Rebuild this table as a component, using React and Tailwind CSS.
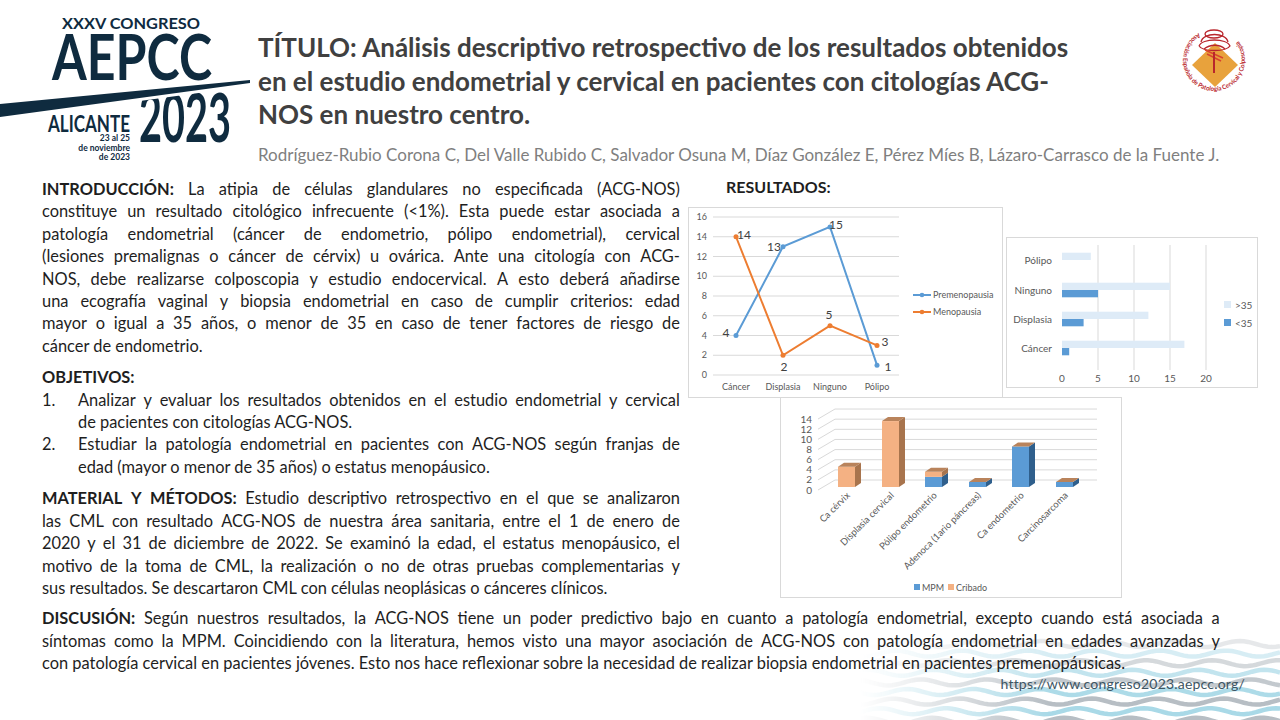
import React from 'react';

const NAVY = '#0f2b3f';

// one justified line: words spread across the width, never wraps
function J({ b, t }) {
  const words = [
    ...(b ? b.split(' ').map((w) => [w, true]) : []),
    ...t.split(' ').map((w) => [w, false]),
  ];
  return (
    <div className="flex justify-between gap-[3px] whitespace-nowrap">
      {words.map(([w, bold], i) => (
        <span key={i} className={bold ? 'font-bold' : ''}>{w}</span>
      ))}
    </div>
  );
}

function AepccLogo() {
  return (
    <svg width="250" height="170" viewBox="0 0 250 170" className="shrink-0">
      <text x="131" y="29" textAnchor="middle" fontSize="15" fontWeight="700" fill={NAVY} fontFamily="Lato, sans-serif" textLength="138" lengthAdjust="spacingAndGlyphs">XXXV CONGRESO</text>
      <text x="52" y="80" fontSize="64" fontWeight="700" fill={NAVY} fontFamily="Lato, sans-serif" textLength="160" lengthAdjust="spacingAndGlyphs">AEPCC</text>
      <text x="48" y="132" fontSize="23" fontWeight="700" fill={NAVY} fontFamily="Lato, sans-serif" textLength="82" lengthAdjust="spacingAndGlyphs">ALICANTE</text>
      <text x="139" y="142" fontSize="67" fontWeight="700" fill={NAVY} fontFamily="Lato, sans-serif" textLength="92" lengthAdjust="spacingAndGlyphs">2023</text>
      <polygon points="0,100 250,77 250,86 0,120" fill="#ffffff" />
      <polygon points="0,104 250,80 250,83 0,117" fill={NAVY} />
      <g fontFamily="Lato, sans-serif" fontWeight="700" fontSize="8.5" fill={NAVY} textAnchor="end">
        <text x="130" y="141">23 al 25</text>
        <text x="130" y="150.5">de noviembre</text>
        <text x="130" y="160">de 2023</text>
      </g>
    </svg>
  );
}

function AepccSeal() {
  const r = 31;
  const cx = 38;
  const cy = 38;
  const sx = cx + r * Math.cos((120 * Math.PI) / 180);
  const sy = cy - r * Math.sin((120 * Math.PI) / 180);
  const ex = cx + r * Math.cos((60 * Math.PI) / 180);
  const d = `M ${sx} ${sy} A ${r} ${r} 0 1 0 ${ex} ${sy}`;
  return (
    <svg width="76" height="76" viewBox="0 0 76 76" className="shrink-0">
      <defs>
        <path id="sealArc" d={d} />
      </defs>
      <polygon points="39,21 62,43 39,65 16,43" fill="#e8a23c" />
      <g stroke="#b9262c" fill="none" strokeWidth="1.3">
        <ellipse cx="38" cy="12" rx="9" ry="4" />
        <path d="M25 20 C 27 10, 50 10, 52 20" />
        <path d="M23 24 C 26 16, 51 16, 54 24 C 50 30, 27 30, 23 24" />
        <path d="M28 27 C 34 22, 44 22, 49 27" />
      </g>
      <g stroke="#d9442e" strokeWidth="1.6">
        <line x1="29" y1="28" x2="47" y2="36" />
        <line x1="31" y1="32" x2="45" y2="39" />
      </g>
      <line x1="38" y1="30" x2="38" y2="51" stroke="#b9262c" strokeWidth="2" />
      <text fontSize="6.4" fontWeight="700" fill="#b9262c" fontFamily="Lato, sans-serif">
        <textPath href="#sealArc" textLength="150" lengthAdjust="spacingAndGlyphs">
          Asociación Española de Patología Cervical y Colposcopia
        </textPath>
      </text>
    </svg>
  );
}

function LineChart() {
  const xs = [48, 95, 142, 189];
  const y = (v) => 168 - v * 9.875;
  const pre = [4, 13, 15, 1];
  const meno = [14, 2, 5, 3];
  const ticks = [0, 2, 4, 6, 8, 10, 12, 14, 16];
  const cats = ['Cáncer', 'Displasia', 'Ninguno', 'Pólipo'];
  const preLabels = [[38, 126], [86, 40], [148, 18], [200, 160]];
  const menoLabels = [[56, 28], [96, 160], [141, 108], [197, 135]];
  return (
    <div className="w-[315px] h-[191px] border border-[#d9d9d9] bg-white shrink-0">
      <svg width="313" height="189" viewBox="1 1 313 189" fontFamily="Lato, sans-serif">
        {ticks.map((t) => (
          <g key={t}>
            <line x1="25" x2="211" y1={y(t)} y2={y(t)} stroke="#d9d9d9" strokeWidth="1" />
            <text x="19" y={y(t) + 3} fontSize="9" fill="#595959" textAnchor="end">{t}</text>
          </g>
        ))}
        {cats.map((c, i) => (
          <text key={c} x={xs[i]} y="183" fontSize="9" fill="#595959" textAnchor="middle">{c}</text>
        ))}
        <polyline points={xs.map((x, i) => `${x},${y(pre[i])}`).join(' ')} fill="none" stroke="#5b9bd5" strokeWidth="2" />
        <polyline points={xs.map((x, i) => `${x},${y(meno[i])}`).join(' ')} fill="none" stroke="#ed7d31" strokeWidth="2" />
        {xs.map((x, i) => (
          <g key={x}>
            <circle cx={x} cy={y(pre[i])} r="2.5" fill="#5b9bd5" />
            <circle cx={x} cy={y(meno[i])} r="2.5" fill="#ed7d31" />
          </g>
        ))}
        {preLabels.map(([lx, ly], i) => (
          <text key={'p' + i} x={lx} y={ly + 4} fontSize="12" fill="#404040" textAnchor="middle">{pre[i]}</text>
        ))}
        {menoLabels.map(([lx, ly], i) => (
          <text key={'m' + i} x={lx} y={ly + 4} fontSize="12" fill="#404040" textAnchor="middle">{meno[i]}</text>
        ))}
        <line x1="225" x2="243" y1="88" y2="88" stroke="#5b9bd5" strokeWidth="2" />
        <circle cx="234" cy="88" r="2.3" fill="#5b9bd5" />
        <text x="245" y="91" fontSize="9" fill="#595959">Premenopausia</text>
        <line x1="225" x2="243" y1="105" y2="105" stroke="#ed7d31" strokeWidth="2" />
        <circle cx="234" cy="105" r="2.3" fill="#ed7d31" />
        <text x="245" y="108" fontSize="9" fill="#595959">Menopausia</text>
      </svg>
    </div>
  );
}

function BarChart() {
  const cats = [
    { n: 'Pólipo', c: 23, a: 4, b: 0 },
    { n: 'Ninguno', c: 53, a: 15, b: 5 },
    { n: 'Displasia', c: 82, a: 12, b: 3 },
    { n: 'Cáncer', c: 111, a: 17, b: 1 },
  ];
  const u = 7.2;
  return (
    <div className="w-[252px] h-[151px] border border-[#d9d9d9] bg-white shrink-0 ml-[3px] mt-[30px]">
      <svg width="250" height="149" viewBox="1 1 250 149" fontFamily="Lato, sans-serif">
        {[1, 2, 3, 4].map((k) => (
          <line key={k} x1={56 + 36 * k} x2={56 + 36 * k} y1="8" y2="133" stroke="#d9d9d9" strokeWidth="1" />
        ))}
        {[0, 5, 10, 15, 20].map((v, k) => (
          <text key={v} x={56 + 36 * k} y="145" fontSize="10" fill="#595959" textAnchor="middle">{v}</text>
        ))}
        {cats.map((c) => (
          <g key={c.n}>
            <rect x="56" y={c.c - 7.3} width={c.a * u} height="7.3" fill="#deebf7" />
            {c.b > 0 && <rect x="56" y={c.c} width={c.b * u} height="7.3" fill="#5b9bd5" />}
            <text x="46" y={c.c + 3.5} fontSize="10" fill="#595959" textAnchor="end">{c.n}</text>
          </g>
        ))}
        <rect x="218" y="64" width="7" height="7" fill="#deebf7" />
        <text x="229" y="71.5" fontSize="10" fill="#595959">&gt;35</text>
        <rect x="218" y="82" width="7" height="7" fill="#5b9bd5" />
        <text x="229" y="89.5" fontSize="10" fill="#595959">&lt;35</text>
      </svg>
    </div>
  );
}

function ColumnChart() {
  const bars = [
    { n: 'Ca cérvix', x: 58, mpm: 0, cri: 4 },
    { n: 'Displasia cervical', x: 102, mpm: 0, cri: 13 },
    { n: 'Pólipo endometrio', x: 145, mpm: 2, cri: 1 },
    { n: 'Adenoca (1ario páncreas)', x: 189, mpm: 1, cri: 0 },
    { n: 'Ca endometrio', x: 232, mpm: 8, cri: 0 },
    { n: 'Carcinosarcoma', x: 276, mpm: 1, cri: 0 },
  ];
  const u = 5.07;
  const base = 90;
  const w = 17;
  const dx = 6;
  const dy = -4;
  const ticks = [0, 2, 4, 6, 8, 10, 12, 14];
  const ly = (v) => 93 - u * v;
  const seg = (x, y0, y1, front, side, key) => (
    <g key={key}>
      <rect x={x} y={y1} width={w} height={y0 - y1} fill={front} />
      <polygon points={`${x + w},${y1} ${x + w + dx},${y1 + dy} ${x + w + dx},${y0 + dy} ${x + w},${y0}`} fill={side} />
    </g>
  );
  return (
    <div className="w-[342px] h-[201px] border border-[#d9d9d9] bg-white shrink-0 ml-[92px] -mt-[1px]">
      <svg width="340" height="199" viewBox="1 1 340 199" fontFamily="Lato, sans-serif">
        {ticks.map((t) => (
          <g key={t}>
            <polyline points={`38,${ly(t)} 55,${ly(t) - 10} 317,${ly(t) - 10}`} fill="none" stroke="#d9d9d9" strokeWidth="1" />
            <text x="32" y={ly(t) + 3.5} fontSize="10" fill="#595959" textAnchor="end">{t}</text>
          </g>
        ))}
        {bars.map((b, i) => {
          const top1 = base - b.mpm * u;
          const top2 = top1 - b.cri * u;
          return (
            <g key={b.n}>
              {b.mpm > 0 && seg(b.x, base, top1, '#5b9bd5', '#2f5f8c', 'a' + i)}
              {b.cri > 0 && seg(b.x, top1, top2, '#f4b183', '#a8744d', 'b' + i)}
              <polygon points={`${b.x},${top2} ${b.x + dx},${top2 + dy} ${b.x + w + dx},${top2 + dy} ${b.x + w},${top2}`} fill="#b9835b" />
              <text x={b.x + w / 2 + 4} y="99" fontSize="9.5" fill="#595959" textAnchor="end" transform={`rotate(-45 ${b.x + w / 2 + 4} 99)`}>{b.n}</text>
            </g>
          );
        })}
        <rect x="134" y="187" width="6" height="6" fill="#5b9bd5" />
        <text x="142" y="193.5" fontSize="9" fill="#595959">MPM</text>
        <rect x="168" y="187" width="6" height="6" fill="#f4b183" />
        <text x="176" y="193.5" fontSize="9" fill="#595959">Cribado</text>
      </svg>
    </div>
  );
}

function Waves() {
  const stripes = [];
  for (let i = 0; i < 9; i++) {
    const y0 = 8 + i * 9.6;
    let d = '';
    for (let x = 0; x <= 420; x += 4) {
      const yy = y0 + 3 * Math.sin((x / 66) * 2 * Math.PI + i * 1.3);
      d += (x === 0 ? 'M' : 'L') + x + ' ' + yy.toFixed(2) + ' ';
    }
    stripes.push(
      <path key={i} d={d} fill="none" stroke={i % 2 === 0 ? '#b7bec4' : '#a9d9e7'} strokeWidth="4.5" opacity={Math.min(1, 0.35 + i * 0.12)} />
    );
  }
  return (
    <svg className="absolute right-0 bottom-0 pointer-events-none" width="420" height="84" viewBox="0 0 420 84">
      <defs>
        <linearGradient id="fadeX" x1="0" x2="1" y1="0" y2="0">
          <stop offset="0" stopColor="#fff" stopOpacity="0" />
          <stop offset="0.45" stopColor="#fff" stopOpacity="1" />
          <stop offset="1" stopColor="#fff" stopOpacity="1" />
        </linearGradient>
        <mask id="waveMask">
          <rect x="0" y="0" width="420" height="84" fill="url(#fadeX)" />
        </mask>
      </defs>
      <g mask="url(#waveMask)">{stripes}</g>
    </svg>
  );
}

export default function App() {
  return (
    <div className="w-[1280px] h-[720px] relative overflow-hidden bg-white [font-family:Lato,sans-serif] text-[#1e1e1e]">
      <Waves />
      <div className="relative">
        {/* Header */}
        <div className="flex h-[170px]">
          <AepccLogo />
          <div className="flex-1 ml-[8px]">
            <div className="flex justify-between h-[131px]">
              <h1 className="pt-[31px] text-[26px] leading-[33.5px] font-bold text-[#404040] whitespace-nowrap">
                <div>TÍTULO: Análisis descriptivo retrospectivo de los resultados obtenidos</div>
                <div>en el estudio endometrial y cervical en pacientes con citologías ACG-</div>
                <div>NOS en nuestro centro.</div>
              </h1>
              <div className="mt-[22px] mr-[28px]">
                <AepccSeal />
              </div>
            </div>
            <p className="mt-[13px] text-[17px] leading-[22px] text-[#7f7f7f] whitespace-nowrap">
              Rodríguez-Rubio Corona C, Del Valle Rubido C, Salvador Osuna M, Díaz González E, Pérez Míes B, Lázaro-Carrasco de la Fuente J.
            </p>
          </div>
        </div>

        {/* Body */}
        <div className="flex mt-[8px]">
          <div className="ml-[42px] w-[638px] text-[16.4px] leading-[22.4px] shrink-0">
            <div>
              <J b="INTRODUCCIÓN:" t="La atipia de células glandulares no especificada (ACG-NOS)" />
              <J t="constituye un resultado citológico infrecuente (<1%). Esta puede estar asociada a" />
              <J t="patología endometrial (cáncer de endometrio, pólipo endometrial), cervical" />
              <J t="(lesiones premalignas o cáncer de cérvix) u ovárica. Ante una citología con ACG-" />
              <J t="NOS, debe realizarse colposcopia y estudio endocervical. A esto deberá añadirse" />
              <J t="una ecografía vaginal y biopsia endometrial en caso de cumplir criterios: edad" />
              <J t="mayor o igual a 35 años, o menor de 35 en caso de tener factores de riesgo de" />
              <div>cáncer de endometrio.</div>
            </div>
            <div className="mt-[9px]">
              <div className="font-bold">OBJETIVOS:</div>
              <div className="flex">
                <span className="w-[36px] shrink-0">1.</span>
                <div className="flex-1">
                  <J t="Analizar y evaluar los resultados obtenidos en el estudio endometrial y cervical" />
                  <div>de pacientes con citologías ACG-NOS.</div>
                </div>
              </div>
              <div className="flex">
                <span className="w-[36px] shrink-0">2.</span>
                <div className="flex-1">
                  <J t="Estudiar la patología endometrial en pacientes con ACG-NOS según franjas de" />
                  <div>edad (mayor o menor de 35 años) o estatus menopáusico.</div>
                </div>
              </div>
            </div>
            <div className="mt-[9px]">
              <J b="MATERIAL Y MÉTODOS:" t="Estudio descriptivo retrospectivo en el que se analizaron" />
              <J t="las CML con resultado ACG-NOS de nuestra área sanitaria, entre el 1 de enero de" />
              <J t="2020 y el 31 de diciembre de 2022. Se examinó la edad, el estatus menopáusico, el" />
              <J t="motivo de la toma de CML, la realización o no de otras pruebas complementarias y" />
              <div className="whitespace-nowrap">sus resultados. Se descartaron CML con células neoplásicas o cánceres clínicos.</div>
            </div>
          </div>

          <div className="ml-[8px] flex flex-col">
            <div className="ml-[38px] -mt-[2px] text-[16px] leading-[22px] font-bold">RESULTADOS:</div>
            <div className="flex items-start mt-[9px]">
              <LineChart />
              <BarChart />
            </div>
            <ColumnChart />
          </div>
        </div>

        {/* Discussion */}
        <div className="ml-[42px] w-[1178px] mt-[8px] text-[16.4px] leading-[22.4px]">
          <J b="DISCUSIÓN:" t="Según nuestros resultados, la ACG-NOS tiene un poder predictivo bajo en cuanto a patología endometrial, excepto cuando está asociada a" />
          <J t="síntomas como la MPM. Coincidiendo con la literatura, hemos visto una mayor asociación de ACG-NOS con patología endometrial en edades avanzadas y" />
          <div>con patología cervical en pacientes jóvenes. Esto nos hace reflexionar sobre la necesidad de realizar biopsia endometrial en pacientes premenopáusicas.</div>
        </div>

        <div className="flex justify-end pr-[35px] text-[14px] leading-[18px] text-[#3d5563] tracking-[0.2px]">
          https://www.congreso2023.aepcc.org/
        </div>
      </div>
    </div>
  );
}
